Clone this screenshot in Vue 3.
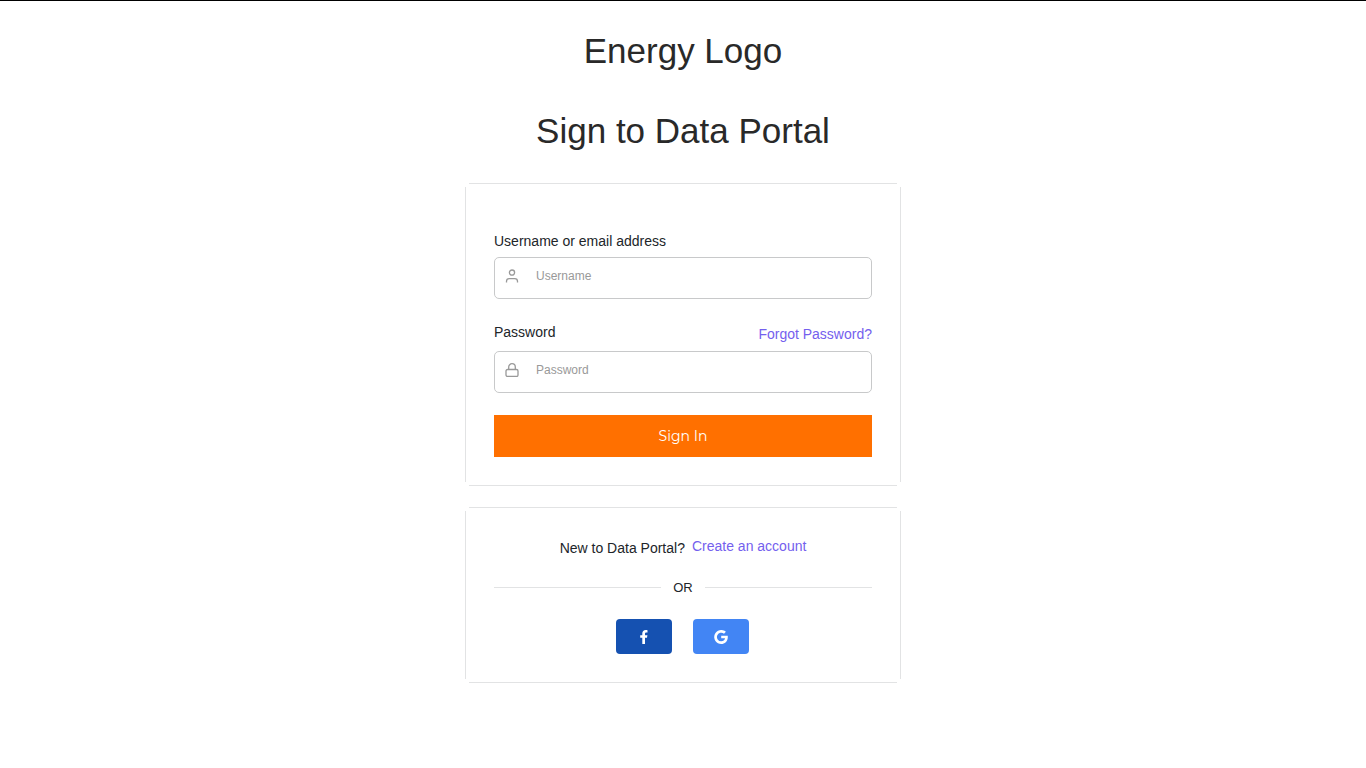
<script setup>
import { ref } from 'vue'

const username = ref('')
const password = ref('')
</script>

<template>
  <main class="page">
    <header class="headings">
      <h1>Energy Logo</h1>
      <h2>Sign to Data Portal</h2>
    </header>

    <form class="card login" @submit.prevent>
      <div class="row">
        <label for="username">Username or email address</label>
      </div>
      <div class="field">
        <svg viewBox="0 0 14 14" aria-hidden="true">
          <circle cx="7" cy="3.6" r="2.6" />
          <path d="M1.5 13.5v-1.2c0-1.6 1.1-2.7 2.7-2.7h5.6c1.6 0 2.7 1.1 2.7 2.7v1.2" />
        </svg>
        <input id="username" v-model="username" type="text" placeholder="Username" />
      </div>

      <div class="row second">
        <label for="password">Password</label>
        <a class="forgot" href="#">Forgot Password?</a>
      </div>
      <div class="field">
        <svg viewBox="0 0 14 14" aria-hidden="true">
          <rect x="1" y="6.5" width="12" height="7" rx="1.5" />
          <path d="M3.7 6.5V4a3.3 3.3 0 0 1 6.6 0v2.5" />
        </svg>
        <input id="password" v-model="password" type="password" placeholder="Password" />
      </div>

      <button class="submit" type="submit">Sign In</button>
    </form>

    <section class="card signup">
      <p class="new">
        <span>New to Data Portal?</span>
        <a href="#">Create an account</a>
      </p>
      <div class="divider"><span>OR</span></div>
      <div class="social">
        <button class="facebook" type="button" aria-label="Sign in with Facebook">
          <svg viewBox="0 0 14 14" aria-hidden="true">
            <path d="M5.3 14V7.8H3.2V5.2h2.1V3.6C5.3 1.3 6.6 0 8.7 0c.9 0 1.8.2 1.8.2v2.2H9.3c-1 0-1.3.6-1.3 1.3v1.5h2.4L10 7.8H8V14z" />
          </svg>
        </button>
        <button class="google" type="button" aria-label="Sign in with Google">
          <svg viewBox="0 0 14 14" aria-hidden="true">
            <path d="M13.7 5.8H7.2v2.5h3.9c-.4 1.9-1.9 3-3.9 3A4.3 4.3 0 1 1 10 3.7l1.9-1.9A7 7 0 1 0 7.2 14c3.5 0 6.6-2.5 6.6-7 0-.4 0-.8-.1-1.2z" />
          </svg>
        </button>
      </div>
    </section>
  </main>
</template>

<style>
body {
  background: #fff;
}
</style>

<style scoped>
.page {
  display: flex;
  flex-direction: column;
  align-items: center;
  border-top: 1px solid #000;
  padding: 0 16px 24px;
  color: #212529;
  font-family: "Liberation Sans", Arial, sans-serif;
  font-size: 14px;
}

.headings {
  padding: 28px 0 30px;
  text-align: center;
}

h1,
h2 {
  margin: 0;
  color: #292929;
  font-size: 35px;
  font-weight: 400;
  line-height: 44px;
}

h2 {
  margin-top: 36px;
}

/* Edge lines stop short of the corners */
.card {
  --line: linear-gradient(#e2e3e4, #e2e3e4);
  box-sizing: border-box;
  width: 100%;
  max-width: 436px;
  padding: 28px 29px;
  background:
    var(--line) center top / calc(100% - 8px) 1px no-repeat,
    var(--line) center bottom / calc(100% - 8px) 1px no-repeat,
    var(--line) left center / 1px calc(100% - 8px) no-repeat,
    var(--line) right center / 1px calc(100% - 8px) no-repeat;
}

.login {
  padding-top: 48px;
  padding-bottom: 29px;
}

.row {
  display: flex;
  justify-content: space-between;
  align-items: flex-start;
  height: 26px;
  line-height: 20px;
}

.row.second {
  margin-top: 23px;
  height: 29px;
}

a {
  color: #7460ee;
  text-decoration: none;
}

.forgot {
  padding-top: 2px;
}

.field {
  display: flex;
  align-items: center;
  gap: 17px;
  box-sizing: border-box;
  height: 42px;
  padding: 0 10px 4px;
  border: 1px solid #c8c9ca;
  border-radius: 5px;
}

.field svg {
  flex: none;
  width: 14px;
  height: 14px;
  fill: none;
  stroke: #999;
  stroke-width: 1.3;
}

.field input {
  flex: 1;
  min-width: 0;
  padding: 0;
  border: 0;
  outline: 0;
  background: none;
  color: #212529;
  font: 12px "Liberation Sans", Arial, sans-serif;
}

.field input::placeholder {
  color: #999;
  opacity: 1;
}

.submit {
  display: block;
  width: 100%;
  height: 42px;
  margin-top: 22px;
  padding: 0;
  border: 0;
  background: #ff7000;
  color: #fff;
  font: 400 14px Montserrat, Inter, sans-serif;
}

.signup {
  margin-top: 21px;
}

.new {
  display: flex;
  justify-content: center;
  gap: 7px;
  margin: 0;
  line-height: 22px;
}

.new span {
  padding-top: 2px;
}

.divider {
  display: flex;
  align-items: center;
  gap: 12px;
  margin-top: 18px;
  font-size: 13px;
  line-height: 21px;
}

.divider::before,
.divider::after {
  content: "";
  flex: 1;
  height: 1px;
  background: #e2e3e4;
}

.social {
  display: flex;
  justify-content: center;
  gap: 21px;
  margin-top: 21px;
  padding: 0 1px 1px 0;
}

.social button {
  display: flex;
  align-items: center;
  justify-content: center;
  width: 56px;
  height: 35px;
  padding: 0;
  border: 0;
  border-radius: 4px;
}

.social svg {
  width: 14px;
  height: 14px;
  fill: #fff;
}

.facebook {
  background: #1551b1;
}

.google {
  background: #4285f4;
}
</style>
